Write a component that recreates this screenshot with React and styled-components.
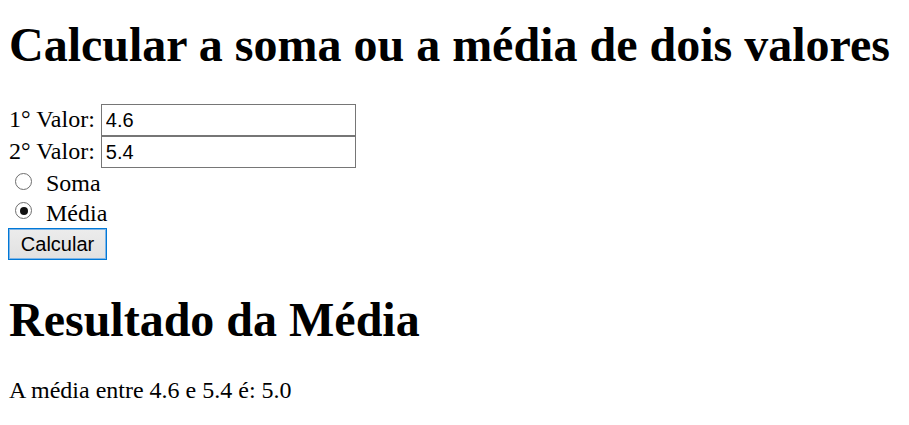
import React, { useState } from "react";
import styled, { createGlobalStyle } from "styled-components";

const Global = createGlobalStyle`
  html, body { margin: 0; padding: 0; background: #fff; }
  body { font-family: "Liberation Serif", "Times New Roman", serif; font-size: 24px; color: #000; }
`;

const Page = styled.div`
  padding: 0 9px;
`;

const Title = styled.h1`
  font-size: 48px;
  font-weight: bold;
  line-height: 55px;
  margin: ${(p) => (p.$result ? "32px 0 30px" : "17px 0 32px")};
`;

const Form = styled.form`
  display: flex;
  flex-direction: column;
  align-items: flex-start;
`;

const Field = styled.div`
  display: flex;
  align-items: baseline;
  gap: 6px;
  height: 32px;
`;

const Label = styled.label`
  font-size: 24px;
`;

const TextInput = styled.input`
  box-sizing: border-box;
  width: 255px;
  height: 32px;
  margin: 0;
  padding: 0 4px;
  border: 1px solid #767676;
  border-radius: 0;
  font-family: "Liberation Sans", Arial, sans-serif;
  font-size: 20px;
  color: #000;
  background: #fff;
  outline: none;
`;

const RadioRow = styled.div`
  display: flex;
  align-items: flex-start;
  height: 30px;
`;

const Radio = styled.input`
  appearance: none;
  box-sizing: border-box;
  width: 17px;
  height: 17px;
  margin: ${(p) => (p.$second ? "4px" : "5px")} 0 0 6px;
  border: 1.5px solid #6e6e6e;
  border-radius: 50%;
  background: #fff;
  display: grid;
  place-items: center;
  &:checked::after {
    content: "";
    width: 8px;
    height: 8px;
    border-radius: 50%;
    background: #111;
  }
`;

const RadioText = styled.label`
  margin-left: 14px;
  line-height: 30px;
`;

const Button = styled.button`
  box-sizing: border-box;
  height: 32px;
  width: 99px;
  margin: 0 0 0 -1px;
  padding: 0;
  border: 1px solid #0078d7;
  box-shadow: inset 0 0 0 1px #7fb5e6;
  border-radius: 0;
  background: linear-gradient(#ececec, #e1e1e1);
  font-family: "Liberation Sans", Arial, sans-serif;
  font-size: 20px;
  color: #000;
`;

const Result = styled.p`
  margin: 0;
  font-size: 24px;
`;

export default function App() {
  const [op, setOp] = useState("media");
  return (
    <Page>
      <Global />
      <Title>Calcular a soma ou a média de dois valores</Title>
      <Form onSubmit={(e) => e.preventDefault()}>
        <Field>
          <Label htmlFor="v1">1° Valor:</Label>
          <TextInput id="v1" type="text" defaultValue="4.6" />
        </Field>
        <Field>
          <Label htmlFor="v2">2° Valor:</Label>
          <TextInput id="v2" type="text" defaultValue="5.4" />
        </Field>
        <RadioRow>
          <Radio type="radio" id="soma" name="op" checked={op === "soma"} onChange={() => setOp("soma")} />
          <RadioText htmlFor="soma">Soma</RadioText>
        </RadioRow>
        <RadioRow>
          <Radio $second type="radio" id="media" name="op" checked={op === "media"} onChange={() => setOp("media")} />
          <RadioText htmlFor="media">Média</RadioText>
        </RadioRow>
        <Button type="submit">Calcular</Button>
      </Form>
      <Title $result>Resultado da Média</Title>
      <Result>A média entre 4.6 e 5.4 é: 5.0</Result>
    </Page>
  );
}
